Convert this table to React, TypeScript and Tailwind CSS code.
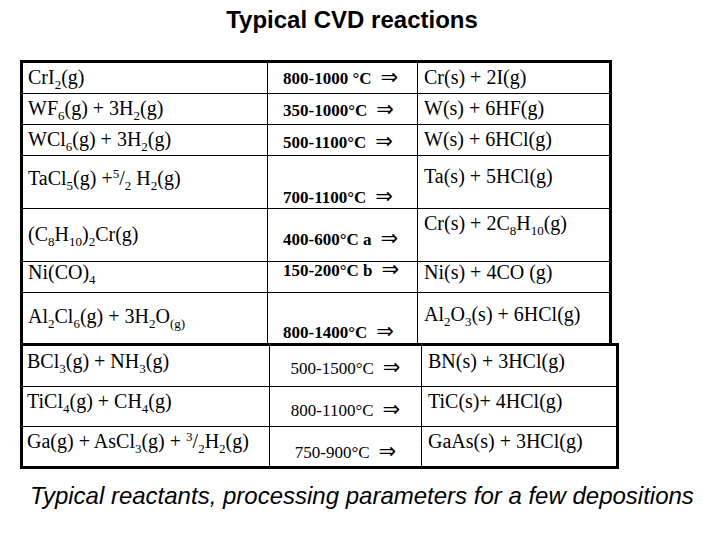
import type { ReactNode } from "react";

const Sub = ({ children }: { children: ReactNode }) => (
  <span className="relative top-[5px] text-[13px]">{children}</span>
);

const Sup = ({ children }: { children: ReactNode }) => (
  <span className="relative -top-[7px] text-[13px]">{children}</span>
);

const Arrow = () => (
  <span className="ml-[9px] font-['DejaVu_Sans',sans-serif] font-normal text-[21px] leading-[0px]">⇒</span>
);

type Row = {
  h: string;
  left: ReactNode;
  mid: ReactNode;
  right: ReactNode;
  lt: string;
  mt: string;
  rt: string;
};

const topRows: Row[] = [
  {
    h: "h-[30px]",
    left: <>CrI<Sub>2</Sub>(g)</>,
    mid: <>800-1000 °C</>,
    right: <>Cr(s) + 2I(g)</>,
    lt: "pt-[4px]",
    mt: "pt-[7px]",
    rt: "pt-[4px]",
  },
  {
    h: "h-[31px]",
    left: <>WF<Sub>6</Sub>(g) + 3H<Sub>2</Sub>(g)</>,
    mid: <>350-1000°C</>,
    right: <>W(s) + 6HF(g)</>,
    lt: "pt-[4px]",
    mt: "pt-[8px]",
    rt: "pt-[4px]",
  },
  {
    h: "h-[31px]",
    left: <>WCl<Sub>6</Sub>(g) + 3H<Sub>2</Sub>(g)</>,
    mid: <>500-1100°C</>,
    right: <>W(s) + 6HCl(g)</>,
    lt: "pt-[4px]",
    mt: "pt-[9px]",
    rt: "pt-[4px]",
  },
  {
    h: "h-[53px]",
    left: <>TaCl<Sub>5</Sub>(g) +<Sup>5</Sup>/<Sub>2</Sub> H<Sub>2</Sub>(g)</>,
    mid: <>700-1100°C</>,
    right: <>Ta(s) + 5HCl(g)</>,
    lt: "pt-[12px]",
    mt: "pt-[33px]",
    rt: "pt-[10px]",
  },
  {
    h: "h-[53px]",
    left: <>(C<Sub>8</Sub>H<Sub>10</Sub>)<Sub>2</Sub>Cr(g)</>,
    mid: <>400-600°C a</>,
    right: <>Cr(s) + 2C<Sub>8</Sub>H<Sub>10</Sub>(g)</>,
    lt: "pt-[15px]",
    mt: "pt-[22px]",
    rt: "pt-[4px]",
  },
  {
    h: "h-[31px]",
    left: <>Ni(CO)<Sub>4</Sub></>,
    mid: <>150-200°C b</>,
    right: <>Ni(s) + 4CO (g)</>,
    lt: "pt-[0px]",
    mt: "pt-[0px]",
    rt: "pt-[0px]",
  },
  {
    h: "h-[51px]",
    left: <>Al<Sub>2</Sub>Cl<Sub>6</Sub>(g) + 3H<Sub>2</Sub>O<Sub>(g)</Sub></>,
    mid: <>800-1400°C</>,
    right: <>Al<Sub>2</Sub>O<Sub>3</Sub>(s) + 6HCl(g)</>,
    lt: "pt-[13px]",
    mt: "pt-[31px]",
    rt: "pt-[11px]",
  },
];

const bottomRows: Row[] = [
  {
    h: "h-[40px]",
    left: <>BCl<Sub>3</Sub>(g) + NH<Sub>3</Sub>(g)</>,
    mid: <>500-1500°C</>,
    right: <>BN(s) + 3HCl(g)</>,
    lt: "pt-[5px]",
    mt: "pt-[14px]",
    rt: "pt-[5px]",
  },
  {
    h: "h-[40px]",
    left: <>TiCl<Sub>4</Sub>(g) + CH<Sub>4</Sub>(g)</>,
    mid: <>800-1100°C</>,
    right: <>TiC(s)+ 4HCl(g)</>,
    lt: "pt-[4px]",
    mt: "pt-[15px]",
    rt: "pt-[4px]",
  },
  {
    h: "h-[40px]",
    left: <>Ga(g) + AsCl<Sub>3</Sub>(g) + <Sup>3</Sup>/<Sub>2</Sub>H<Sub>2</Sub>(g)</>,
    mid: <>750-900°C</>,
    right: <>GaAs(s) + 3HCl(g)</>,
    lt: "pt-[4px]",
    mt: "pt-[17px]",
    rt: "pt-[4px]",
  },
];

export default function App() {
  return (
    <div className="w-[720px] h-[540px] bg-white text-black overflow-hidden">
      {/* Title */}
      <div className="h-[60px] pt-[6px]">
        <div className="w-[704px] text-center font-['Liberation_Sans',Arial,sans-serif] font-bold text-[24px] leading-[28px]">
          Typical CVD reactions
        </div>
      </div>

      <div className="pl-[20px] font-['Liberation_Serif','Times_New_Roman',serif]">
        {/* Upper table */}
        <div className="w-[592px] border-[3px] border-b-0 border-black">
          {topRows.map((r, i) => (
            <div
              key={i}
              className={`flex ${r.h} ${i > 0 ? "border-t border-black" : ""}`}
            >
              <div className={`w-[244px] pl-[5px] text-[20px] leading-[20px] whitespace-nowrap ${r.lt}`}>
                {r.left}
              </div>
              <div className={`w-[150px] border-l border-black pl-[15px] text-[17px] leading-[17px] font-bold whitespace-nowrap ${r.mt}`}>
                {r.mid}
                <Arrow />
              </div>
              <div className={`w-[192px] border-l border-black pl-[6px] text-[20px] leading-[20px] whitespace-nowrap ${r.rt}`}>
                {r.right}
              </div>
            </div>
          ))}
        </div>

        {/* Lower table */}
        <div className="w-[599px] border-[3px] border-black">
          {bottomRows.map((r, i) => (
            <div
              key={i}
              className={`flex ${r.h} ${i > 0 ? "border-t border-black" : ""}`}
            >
              <div className={`w-[246px] pl-[4px] text-[20px] leading-[20px] whitespace-nowrap ${r.lt}`}>
                {r.left}
              </div>
              <div className={`w-[152px] border-l border-black text-center text-[17px] leading-[17px] whitespace-nowrap ${r.mt}`}>
                {r.mid}
                <Arrow />
              </div>
              <div className={`w-[195px] border-l border-black pl-[6px] text-[20px] leading-[20px] whitespace-nowrap ${r.rt}`}>
                {r.right}
              </div>
            </div>
          ))}
        </div>
      </div>

      {/* Caption */}
      <div className="mt-[13px] pl-[30px] font-['Liberation_Sans',Arial,sans-serif] italic text-[24px] leading-[28px] whitespace-nowrap">
        Typical reactants, processing parameters for a few depositions
      </div>
    </div>
  );
}
